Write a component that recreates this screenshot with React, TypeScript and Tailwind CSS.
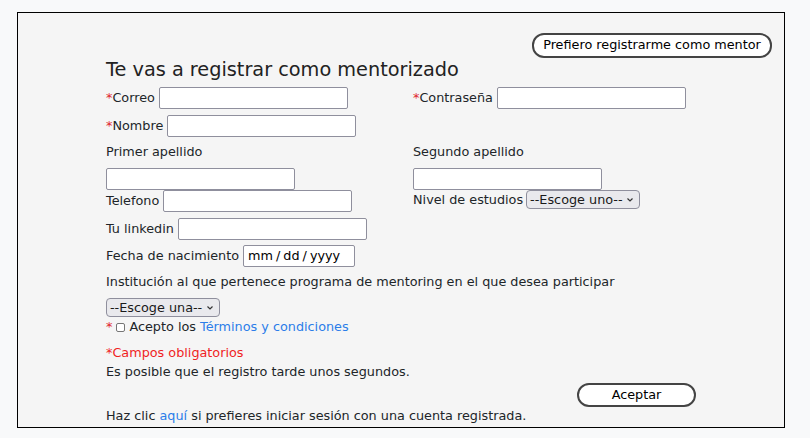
import React from 'react';

const font = { fontFamily: '"DejaVu Sans", Verdana, sans-serif' };

function Field({ w = 'w-[189px]' }: { w?: string }) {
    return <div className={`${w} h-[22px] bg-white border border-[#8f8f9d] rounded-[2px]`} />;
}

function Req() {
    return <span className="text-[#e0272c]">*</span>;
}

function Select({ label, w }: { label: string; w: string }) {
    return (
        <div className={`${w} h-[19px] flex items-center justify-between bg-[#e9e9ed] border border-[#8f8f9d] rounded-[4px] pl-[3px] pr-[5px] text-[12.8px] text-[#1a1a1a]`}>
            <span>{label}</span>
            <svg width="8" height="6" viewBox="0 0 8 6" fill="none" stroke="#333" strokeWidth="1.2"><path d="M1.5 1.5 L4 4 L6.5 1.5" /></svg>
        </div>
    );
}

export default function App() {
    return (
        <div className="w-[810px] h-[438px] bg-[#f8f9fa] pt-[12px] pl-[17px] text-[12.8px] text-[#212529]" style={font}>
            <div className="w-[768px] h-[416px] border border-black bg-[#f5f5f5] flex flex-col pl-[88px]">
                <button className="self-end mr-[12px] mt-[20px] w-[240px] h-[25px] bg-white border-2 border-[#444] rounded-[12px] text-[12.8px] text-black leading-none">
                    Prefiero registrarme como mentor
                </button>
                <h1 className="h-[23px] flex items-center text-[19.3px] text-[#222] leading-none">Te vas a registrar como mentorizado</h1>

                <div className="mt-[6px] grid grid-cols-[307px_307px] h-[22px]">
                    <div className="flex items-center gap-[4px]"><span><Req />Correo</span><Field /></div>
                    <div className="flex items-center gap-[4px]"><span><Req />Contraseña</span><Field /></div>
                </div>
                <div className="mt-[6px] flex items-center gap-[4px] h-[22px]"><span><Req />Nombre</span><Field /></div>

                <div className="mt-[4px] grid grid-cols-[307px_307px] h-[22px] items-center">
                    <span>Primer apellido</span>
                    <span>Segundo apellido</span>
                </div>
                <div className="mt-[5px] grid grid-cols-[307px_307px] h-[22px]">
                    <Field />
                    <Field />
                </div>
                <div className="grid grid-cols-[307px_307px] h-[22px]">
                    <div className="flex items-center gap-[4px]"><span>Telefono</span><Field /></div>
                    <div className="flex items-center gap-[3px] self-start h-[19px]"><span>Nivel de estudios</span><Select label="--Escoge uno--" w="w-[114px]" /></div>
                </div>
                <div className="mt-[6px] flex items-center gap-[4px] h-[22px]"><span>Tu linkedin</span><Field /></div>
                <div className="mt-[5px] flex items-center gap-[4px] h-[22px]">
                    <span>Fecha de nacimiento</span>
                    <div className="w-[112px] h-[22px] bg-white border border-[#8f8f9d] rounded-[2px] flex items-center gap-[3px] pl-[4px] text-[12.8px] text-black">
                        <span>mm</span><span>/</span><span>dd</span><span>/</span><span>yyyy</span>
                    </div>
                </div>
                <div className="mt-[4px] h-[22px] flex items-center">Institución al que pertenece programa de mentoring en el que desea participar</div>
                <div className="mt-[5px] h-[19px] flex"><Select label="--Escoge una--" w="w-[114px]" /></div>
                <div className="mt-[2px] h-[16px] flex items-center">
                    <Req />
                    <span className="ml-[4px] w-[9px] h-[9px] border border-[#767676] rounded-[2px] bg-white" />
                    <span className="ml-[4px]">Acepto los <span className="text-[#2b7de9]">Términos y condiciones</span></span>
                </div>
                <div className="mt-[10px] h-[16px] flex items-center text-[#f01f1f]">*Campos obligatorios</div>
                <div className="mt-[3px] h-[16px] flex items-center">Es posible que el registro tarde unos segundos.</div>
                <button className="mt-[3px] ml-[471px] w-[119px] h-[24px] bg-white border-2 border-[#444] rounded-[12px] text-[12.8px] text-black leading-none">Aceptar</button>
                <div className="mt-[1px] h-[16px] flex items-center">
                    <span>Haz clic <span className="text-[#2b7de9]">aquí</span> si prefieres iniciar sesión con una cuenta registrada.</span>
                </div>
            </div>
        </div>
    );
}
